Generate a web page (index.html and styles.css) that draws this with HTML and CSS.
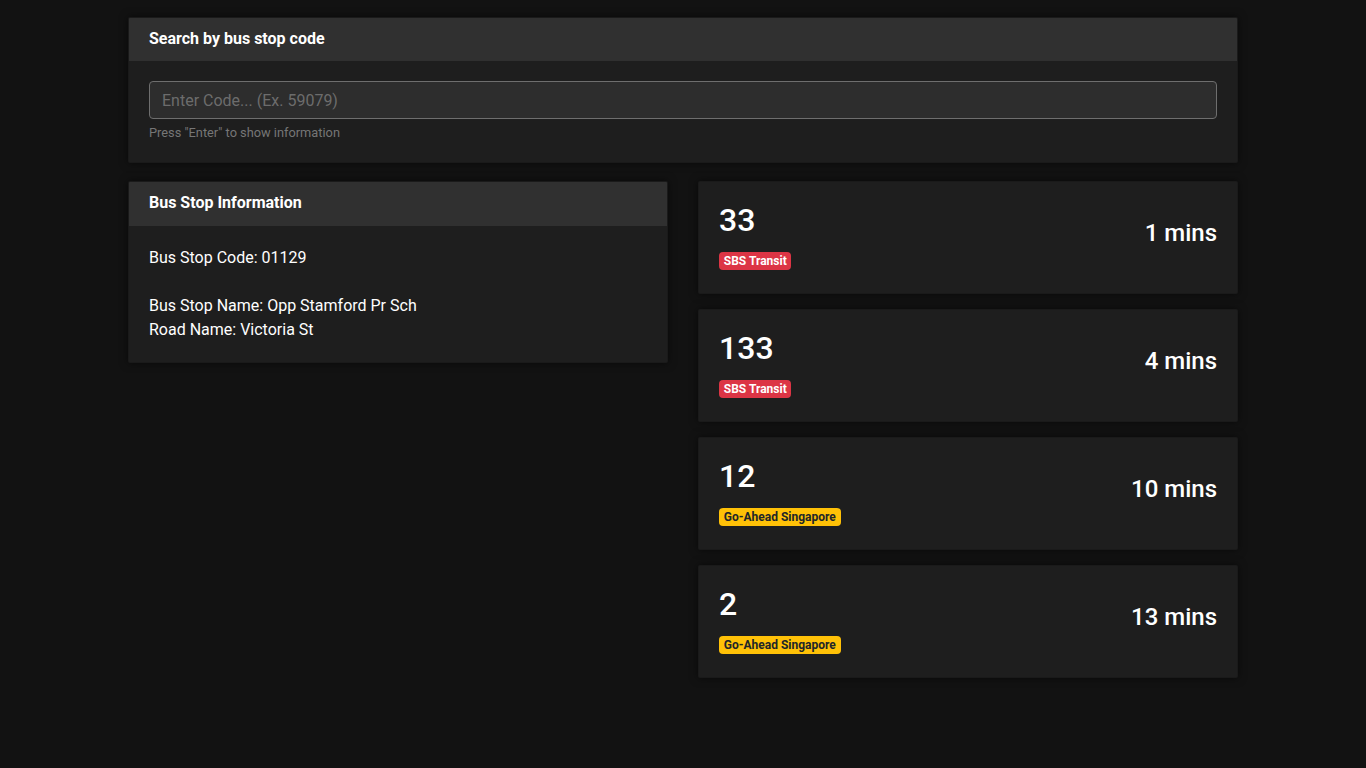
FILE: index.html
```html
<!DOCTYPE html>
<html lang="en">
<head>
<meta charset="utf-8">
<title>Bus Arrival</title>
<link rel="stylesheet" href="styles.css">
</head>
<body>
<div class="container">
  <div class="card search-card">
    <div class="card-header">Search by bus stop code</div>
    <div class="card-body">
      <input class="form-control" type="text" placeholder="Enter Code... (Ex. 59079)">
      <small class="form-text">Press "Enter" to show information</small>
    </div>
  </div>

  <div class="row">
    <div class="col">
      <div class="card">
        <div class="card-header">Bus Stop Information</div>
        <div class="card-body info">
          Bus Stop Code: 01129<br><br>
          Bus Stop Name: Opp Stamford Pr Sch<br>
          Road Name: Victoria St
        </div>
      </div>
    </div>
    <div class="col">
      <div class="card bus-card">
        <div class="bus-left">
          <h2 class="bus-no">33</h2>
          <div><span class="badge badge-red">SBS Transit</span></div>
        </div>
        <h4 class="eta">1 mins</h4>
      </div>
      <div class="card bus-card">
        <div class="bus-left">
          <h2 class="bus-no">133</h2>
          <div><span class="badge badge-red">SBS Transit</span></div>
        </div>
        <h4 class="eta">4 mins</h4>
      </div>
      <div class="card bus-card">
        <div class="bus-left">
          <h2 class="bus-no">12</h2>
          <div><span class="badge badge-yellow">Go-Ahead Singapore</span></div>
        </div>
        <h4 class="eta">10 mins</h4>
      </div>
      <div class="card bus-card">
        <div class="bus-left">
          <h2 class="bus-no">2</h2>
          <div><span class="badge badge-yellow">Go-Ahead Singapore</span></div>
        </div>
        <h4 class="eta">13 mins</h4>
      </div>
    </div>
  </div>
</div>
</body>
</html>
```

FILE: styles.css
```css
* { box-sizing: border-box; }

html, body {
  margin: 0;
  padding: 0;
  background: #121212;
}

body {
  font-family: Roboto, "Liberation Sans", Arial, sans-serif;
  font-size: 16px;
  line-height: 1.5;
  color: #ffffff;
}

.container {
  width: 1110px;
  margin: 0 auto;
  padding-top: 17px;
}

.card {
  background: #1e1e1e;
  border: 1px solid rgba(0, 0, 0, 0.125);
  border-radius: 2px;
  box-shadow: 0 0 8px rgba(0, 0, 0, 0.55);
  overflow: hidden;
}

.card-header {
  background: #303030;
  padding: 11px 20px 13px;
  font-size: 16px;
  font-weight: 700;
  line-height: 1.2;
  color: #ffffff;
}

.card-body {
  padding: 20px;
}

.search-card {
  margin-bottom: 18px;
}

.form-control {
  display: block;
  width: 100%;
  height: 38px;
  padding: 6px 12px;
  font-family: inherit;
  font-size: 16px;
  line-height: 1.5;
  color: #e0e0e0;
  background: #2d2d2d;
  border: 1px solid #6e6e6e;
  border-radius: 4px;
  outline: none;
}

.form-control::placeholder {
  color: #6c6c6c;
}

.form-text {
  display: block;
  margin-top: 4px;
  font-size: 12.8px;
  line-height: 1.5;
  color: #767676;
}

.row {
  display: grid;
  grid-template-columns: 1fr 1fr;
  column-gap: 30px;
  align-items: start;
}

.info {
  line-height: 24px;
}

.bus-card {
  display: flex;
  justify-content: space-between;
  align-items: center;
  padding: 19px 20px 21px;
  margin-bottom: 15.6px;
}

.bus-no {
  margin: 0 0 8px;
  font-size: 32px;
  font-weight: 500;
  line-height: 1.2;
}

.eta {
  margin: 2px 0 8px;
  font-size: 24px;
  font-weight: 500;
  line-height: 1.2;
}

.badge {
  display: inline-block;
  padding: 3px 4.8px;
  font-size: 12px;
  font-weight: 700;
  line-height: 1;
  border-radius: 4px;
  white-space: nowrap;
  vertical-align: baseline;
}

.badge-red {
  background: #dc3545;
  color: #ffffff;
}

.badge-yellow {
  background: #ffc107;
  color: #212529;
}
```
